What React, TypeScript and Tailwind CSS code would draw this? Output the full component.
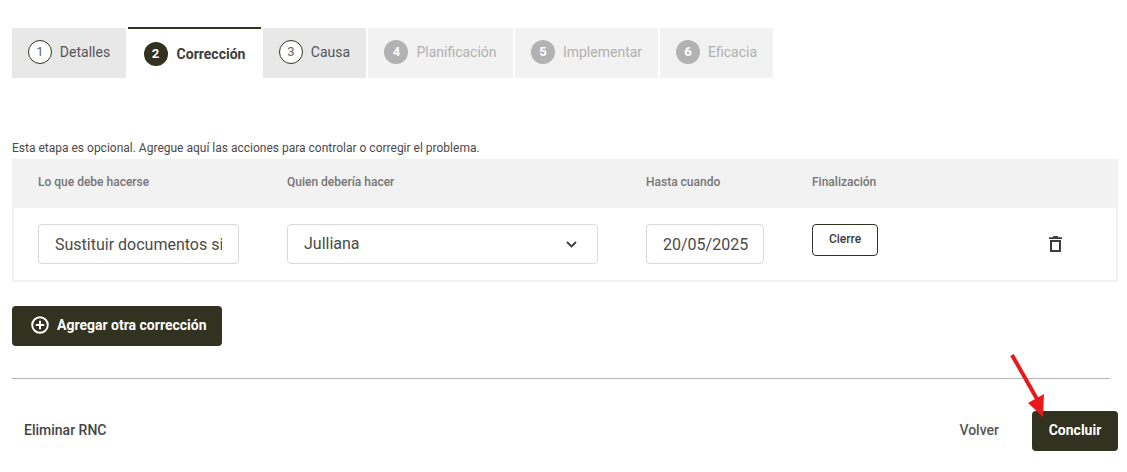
const steps = [
  { n: 1, label: "Detalles", state: "done", width: "w-[114px]" },
  { n: 2, label: "Corrección", state: "active", width: "w-[133px]" },
  { n: 3, label: "Causa", state: "done", width: "w-[103px]" },
  { n: 4, label: "Planificación", state: "locked", width: "w-[145px]" },
  { n: 5, label: "Implementar", state: "locked", width: "w-[143px]" },
  { n: 6, label: "Eficacia", state: "locked", width: "w-[113px]" },
];

function StepTab({ step }: { step: (typeof steps)[number] }) {
  if (step.state === "active") {
    return (
      <div className={`${step.width} h-[52px] -mt-[1px] border-t-2 border-[#31321f] bg-white flex items-center justify-center gap-[9px]`}>
        <span className="w-6 h-6 rounded-full bg-[#31321f] text-white text-[13px] font-bold flex items-center justify-center">
          {step.n}
        </span>
        <span className="text-[14px] font-bold text-[#3c3c3c]">{step.label}</span>
      </div>
    );
  }
  if (step.state === "done") {
    return (
      <div className={`${step.width} h-[50px] bg-[#e8e8e8] flex items-center justify-center gap-2 pb-[2px]`}>
        <span className="w-6 h-6 rounded-full bg-white border border-[#31321f] text-[#666666] text-[13px] flex items-center justify-center">
          {step.n}
        </span>
        <span className="text-[14px] text-[#555555]">{step.label}</span>
      </div>
    );
  }
  return (
    <div className={`${step.width} h-[50px] bg-[#f2f2f2] flex items-center justify-center gap-2 pb-[2px]`}>
      <span className="w-6 h-6 rounded-full bg-[#b2b2b2] text-white text-[13px] font-bold flex items-center justify-center">
        {step.n}
      </span>
      <span className="text-[14px] text-[#b0b0b0]">{step.label}</span>
    </div>
  );
}

export default function App() {
  return (
    <div className="relative w-[1127px] h-[472px] overflow-hidden bg-white font-['Roboto',sans-serif]">
      {/* Tabs */}
      <div className="pt-[28px] pl-3 flex gap-[2px] items-start">
        {steps.map((s) => (
          <StepTab key={s.n} step={s} />
        ))}
      </div>

      <p className="mt-[61px] ml-3 text-[12px] leading-[16px] text-[#4a4a4a]">
        Esta etapa es opcional. Agregue aquí las acciones para controlar o corregir el problema.
      </p>

      {/* Table */}
      <div className="mt-[3px] mx-3 w-[1106px] border-2 border-t-0 border-[#f2f2f2]">
        <div className="h-[49px] -mx-[2px] bg-[#f2f2f2] pl-[26px] flex items-center text-[12px] font-medium text-[#757575] pb-1">
          <span className="w-[249px]">Lo que debe hacerse</span>
          <span className="w-[359px]">Quien debería hacer</span>
          <span className="w-[166px]">Hasta cuando</span>
          <span>Finalización</span>
        </div>
        <div className="h-[72px] pl-[24px] pt-4 flex items-start">
          <div className="w-[249px]">
            <input
              readOnly
              value="Sustituir documentos sin revisión"
              className="w-[201px] h-10 rounded border border-[#d9d9d9] pl-4 pr-4 text-[16px] text-[#4a4a4a] outline-none font-['Roboto',sans-serif]"
            />
          </div>
          <div className="w-[359px]">
            <div className="w-[311px] h-10 rounded border border-[#d9d9d9] pl-4 pr-5 flex items-center justify-between text-[16px] text-[#4a4a4a]">
              <span>Julliana</span>
              <svg width="11" height="7" viewBox="0 0 11 7" fill="none">
                <path d="M1 1l4.500 4.500L10 1" stroke="#3c3c3c" strokeWidth="1.800" />
              </svg>
            </div>
          </div>
          <div className="w-[166px]">
            <input
              readOnly
              value="20/05/2025"
              className="w-[118px] h-10 rounded border border-[#d9d9d9] pl-4 pr-[15px] text-[16px] text-[#4a4a4a] outline-none font-['Roboto',sans-serif]"
            />
          </div>
          <div className="w-[237px]">
            <button className="w-[66px] h-8 rounded border border-[#31321f] bg-white text-[12px] font-medium text-[#3c3c3c] pb-[2px]">
              Cierre
            </button>
          </div>
          <svg className="mt-3" width="14" height="16" viewBox="0 0 14 16" fill="none">
            <path d="M4.500 0h4l.8 1.300H13v1.700H0V1.300h3.700L4.500 0Z" fill="#3c3c3c" />
            <path d="M2 5h9v10H2V5Z" stroke="#3c3c3c" strokeWidth="2" />
          </svg>
        </div>
      </div>

      <div className="mt-6 ml-3">
        <button className="w-[210px] h-10 pb-[2px] rounded bg-[#31321f] text-white text-[14px] font-bold flex items-center pl-[19px] gap-2">
          <svg width="18" height="18" viewBox="0 0 18 18" fill="none">
            <circle cx="9" cy="9" r="7.800" stroke="white" strokeWidth="2" />
            <path d="M9 4.800v8.400M4.800 9h8.400" stroke="white" strokeWidth="2" />
          </svg>
          Agregar otra corrección
        </button>
      </div>

      <div className="mt-8 mx-3 w-[1098px] h-px bg-[#b3b3b3]" />

      {/* Footer */}
      <div className="mt-8 ml-3 w-[1106px] flex items-center justify-between">
        <span className="pl-3 pb-[2px] text-[14px] font-medium text-[#444444]">Eliminar RNC</span>
        <div className="flex items-center gap-[33px]">
          <span className="pb-[2px] text-[14px] font-medium text-[#555555]">Volver</span>
          <button className="w-[86px] h-10 pb-[2px] rounded bg-[#31321f] text-white text-[14px] font-bold">
            Concluir
          </button>
        </div>
      </div>

      {/* Red annotation arrow */}
      <svg className="absolute left-[1000px] top-[345px]" width="60" height="75" viewBox="0 0 60 75" fill="none">
        <path d="M12 10 37 54" stroke="#e8191c" strokeWidth="4" />
        <path d="M28 58 44 49 43 72Z" fill="#e8191c" />
      </svg>
    </div>
  );
}
